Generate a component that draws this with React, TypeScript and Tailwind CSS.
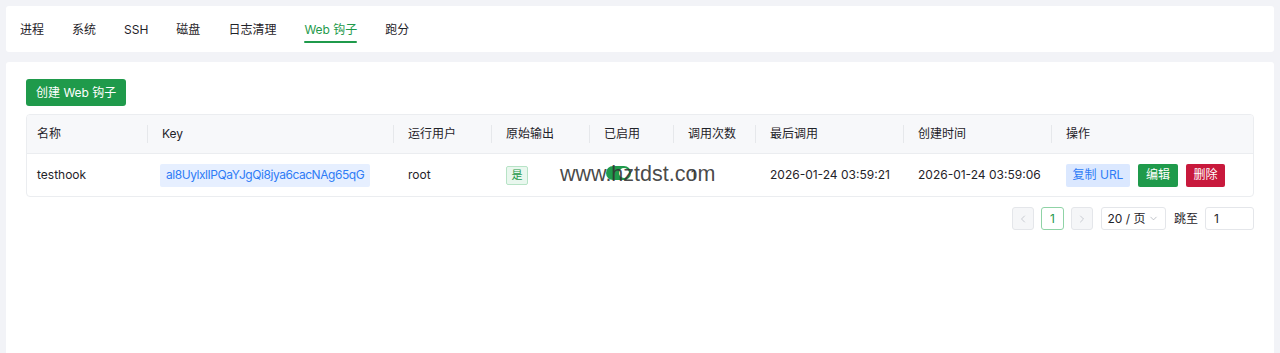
import { ChevronDown, ChevronLeft, ChevronRight } from "lucide-react";

const tabs = ["进程", "系统", "SSH", "磁盘", "日志清理", "Web 钩子", "跑分"];

const cols = [
  { label: "名称", w: "w-[120px]" },
  { label: "Key", w: "w-[246px]" },
  { label: "运行用户", w: "w-[98px]" },
  { label: "原始输出", w: "w-[98px]" },
  { label: "已启用", w: "w-[84px]" },
  { label: "调用次数", w: "w-[82px]" },
  { label: "最后调用", w: "w-[148px]" },
  { label: "创建时间", w: "w-[148px]" },
  { label: "操作", w: "flex-1" },
];

export default function App() {
  return (
    <div
      className="h-[353px] overflow-hidden bg-[#f2f3f7] px-[6px] pt-[6px] text-[12px] text-[#1f2329]"
      style={{ fontFamily: 'Inter, "Noto Sans CJK SC", sans-serif' }}
    >
      {/* tabs */}
      <div className="flex h-[46px] items-stretch gap-[28px] rounded-[3px] bg-white px-[14px]">
        {tabs.map((t) => {
          const active = t === "Web 钩子";
          return (
            <div
              key={t}
              className={`relative flex items-center pt-[1px] ${active ? "text-[#1f9a4b]" : "text-[#1f2329]"}`}
            >
              {t}
              {active && (
                <span className="absolute bottom-[9px] left-0 right-0 h-[2px] rounded bg-[#1f9a4b]" />
              )}
            </div>
          );
        })}
      </div>

      {/* content card */}
      <div className="mt-[10px] h-[300px] rounded-[3px] bg-white px-[20px] pt-[17px]">
        <button className="flex h-[27px] items-center rounded-[3px] bg-[#1f9a4b] px-[10px] text-[12px] text-white">
          创建 Web 钩子
        </button>

        <div className="mt-[8px] overflow-hidden rounded-[4px] border border-[#ebedf0]">
          {/* header */}
          <div className="flex h-[38px] items-center bg-[#f7f8fa]">
            {cols.map((c, i) => (
              <div
                key={c.label}
                className={`relative flex h-full items-center ${i > 0 ? "pl-[15px]" : "pl-[10px]"} ${c.w}`}
              >
                {i > 0 && (
                  <span className="absolute left-0 top-[10px] h-[18px] w-px bg-[#e6e8eb]" />
                )}
                {c.label}
              </div>
            ))}
          </div>
          {/* row */}
          <div className="relative flex h-[43px] items-center border-t border-[#ebedf0]">
            <div className="w-[120px] pl-[10px]">testhook</div>
            <div className="w-[246px] pl-[13px]">
              <span className="inline-flex h-[23px] items-center rounded-[2px] bg-[#e6efff] px-[6px] tracking-[-0.45px] text-[#2f7cf6]">
                al8UylxlIPQaYJgQi8jya6cacNAg65qG
              </span>
            </div>
            <div className="w-[98px] pl-[15px]">root</div>
            <div className="w-[98px] pl-[15px]">
              <span className="inline-flex h-[19px] w-[22px] items-center justify-center rounded-[2px] border border-[#b7e3c6] bg-[#e9f7ee] text-[11px] text-[#1f9a4b]">
                是
              </span>
            </div>
            <div className="w-[84px] pl-[17px]">
              <span className="relative inline-block h-[14px] w-[25px] rounded-full bg-[#1f9a4b]">
                <span className="absolute right-[2px] top-[2px] h-[10px] w-[10px] rounded-full bg-white" />
              </span>
            </div>
            <div className="w-[82px] pl-[18px]">1</div>
            <div className="w-[148px] pl-[15px]">2026-01-24 03:59:21</div>
            <div className="w-[148px] pl-[15px]">2026-01-24 03:59:06</div>
            <div className="flex flex-1 items-center gap-[8px] pl-[15px]">
              <button className="flex h-[23px] w-[64px] items-center justify-center rounded-[2px] bg-[#dbe8ff] text-[#2f7cf6]">
                复制 URL
              </button>
              <button className="flex h-[23px] w-[40px] items-center justify-center rounded-[2px] bg-[#1f9a4b] text-white">
                编辑
              </button>
              <button className="flex h-[23px] w-[39px] items-center justify-center rounded-[2px] bg-[#c8193c] text-white">
                删除
              </button>
            </div>
            {/* watermark */}
            <span
              className="pointer-events-none absolute left-[533px] top-[8px] text-[21.5px] leading-[24px] text-[#333333]/90"
              style={{ fontFamily: '"Liberation Sans", Arial, sans-serif' }}
            >
              www.hztdst.com
            </span>
          </div>
        </div>

        {/* pagination */}
        <div className="mt-[10px] flex items-center justify-end gap-[7px]">
          <span className="flex h-[23px] w-[22px] items-center justify-center rounded-[3px] border border-[#e4e6ea] bg-[#f5f6f8] text-[#b8bcc4]">
            <ChevronLeft size={12} strokeWidth={1.5} />
          </span>
          <span className="flex h-[23px] w-[23px] items-center justify-center rounded-[3px] border border-[#8fd3a6] text-[#1f9a4b]">
            1
          </span>
          <span className="flex h-[23px] w-[22px] items-center justify-center rounded-[3px] border border-[#e4e6ea] bg-[#f5f6f8] text-[#b8bcc4]">
            <ChevronRight size={12} strokeWidth={1.5} />
          </span>
          <span className="ml-[1px] flex h-[23px] w-[65px] items-center justify-center gap-[3px] rounded-[3px] border border-[#e4e6ea] text-[#1f2329]">
            20 / 页
            <ChevronDown size={11} strokeWidth={1.5} className="text-[#a3a8b0]" />
          </span>
          <span className="ml-[1px]">跳至</span>
          <span className="flex h-[23px] w-[49px] items-center rounded-[3px] border border-[#e4e6ea] pl-[8px]">
            1
          </span>
        </div>
      </div>
    </div>
  );
}
